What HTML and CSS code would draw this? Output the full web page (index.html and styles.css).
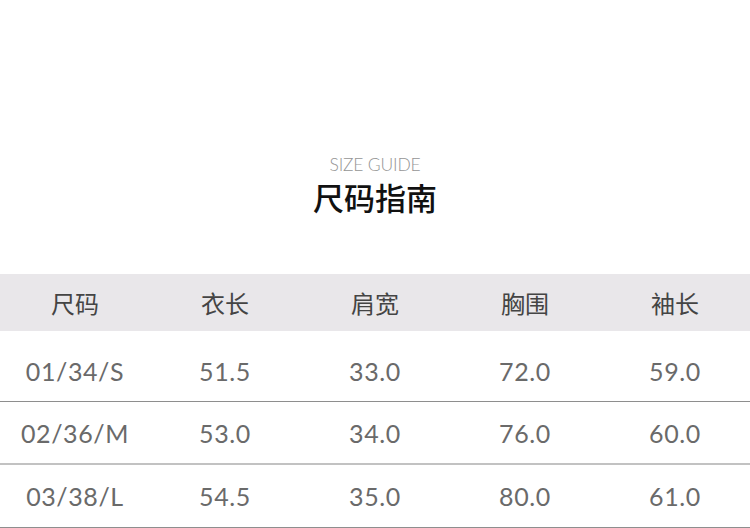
FILE: index.html
```html
<!DOCTYPE html>
<html lang="zh">
<head>
<meta charset="utf-8">
<link rel="stylesheet" href="styles.css">
</head>
<body>
<div class="page">
  <div class="title">
    <div class="en">SIZE GUIDE</div>
    <div class="cn">尺码指南</div>
  </div>
  <div class="table">
    <div class="row head">
      <div class="cell">尺码</div>
      <div class="cell">衣长</div>
      <div class="cell">肩宽</div>
      <div class="cell">胸围</div>
      <div class="cell">袖长</div>
    </div>
    <div class="row first line-a">
      <div class="cell">01/34/S</div>
      <div class="cell">51.5</div>
      <div class="cell">33.0</div>
      <div class="cell">72.0</div>
      <div class="cell">59.0</div>
    </div>
    <div class="row line-b">
      <div class="cell">02/36/M</div>
      <div class="cell">53.0</div>
      <div class="cell">34.0</div>
      <div class="cell">76.0</div>
      <div class="cell">60.0</div>
    </div>
    <div class="row last line-a">
      <div class="cell">03/38/L</div>
      <div class="cell">54.5</div>
      <div class="cell">35.0</div>
      <div class="cell">80.0</div>
      <div class="cell">61.0</div>
    </div>
  </div>
</div>
</body>
</html>
```
FILE: styles.css
```css
html, body {
  margin: 0;
  padding: 0;
  background: #fff;
}
.page {
  width: 750px;
  height: 528px;
  overflow: hidden;
  font-family: "Noto Sans CJK SC", sans-serif;
}
.title {
  padding-top: 155px;
  height: 274px;
  box-sizing: border-box;
  text-align: center;
}
.en {
  font-family: "Lato", "Noto Sans", sans-serif;
  font-weight: 300;
  font-size: 17.5px;
  line-height: 20px;
  color: #959595;
  letter-spacing: -0.2px;
}
.cn {
  font-family: "Noto Sans CJK SC", sans-serif;
  font-weight: 500;
  font-size: 31px;
  line-height: 40px;
  color: #111;
  margin-top: 2px;
}
.table {
  display: flex;
  flex-direction: column;
}
.row {
  display: grid;
  grid-template-columns: repeat(5, 150px);
  align-items: center;
  height: 63px;
  box-sizing: border-box;
}
.cell {
  text-align: center;
}
.head {
  height: 57px;
  background: #e9e7ea;
  color: #444;
  font-size: 24px;
  font-family: "Noto Sans CJK SC", sans-serif;
}
.row:not(.head) .cell {
  font-family: "Lato", "Noto Sans", sans-serif;
  font-size: 25px;
  color: #6a6a6a;
  letter-spacing: 0.6px;
}
.first {
  height: 62px;
  margin-top: 9px;
}
.line-a {
  border-bottom: 1px solid #8e8e8e;
}
.line-b {
  border-bottom: 2px solid #c2c2c2;
}
```
